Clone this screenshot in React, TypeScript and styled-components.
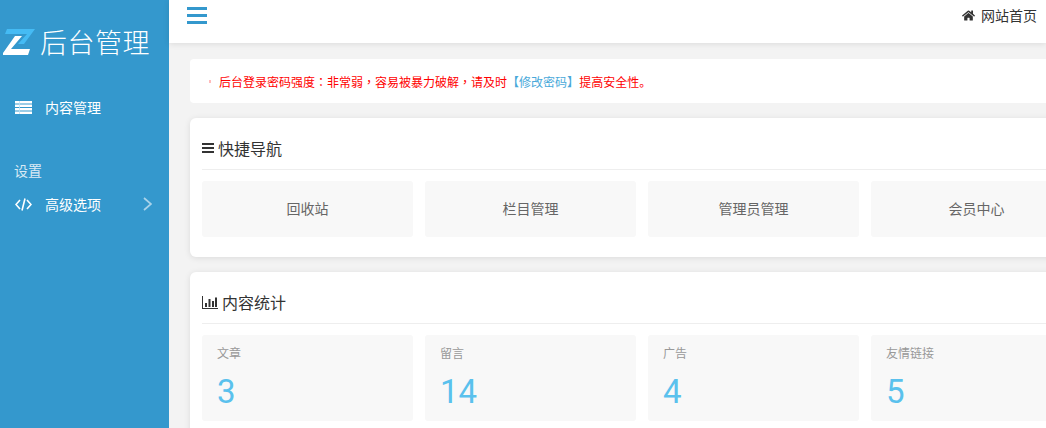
import React from "react";
import styled, { createGlobalStyle } from "styled-components";
import { FaHome } from "react-icons/fa";

const navTiles = ["回收站", "栏目管理", "管理员管理", "会员中心"];
const statTiles = [
  { label: "文章", value: 3 },
  { label: "留言", value: 14 },
  { label: "广告", value: 4 },
  { label: "友情链接", value: 5 },
];

const App = () => {
  return (
    <>
      <GlobalStyle />
      <Page>
        <Sidebar>
          <Logo>
            <svg width="32" height="27" viewBox="0 0 32 27">
              <path d="M4 0H32L21 15H15L24 5H2Z" fill="#45bbf4" />
              <path d="M12 7H19L8 20H27L25 26H0V24Z" fill="#ffffff" />
            </svg>
            <LogoText>后台管理</LogoText>
          </Logo>
          <NavItem>
            <NavIcon>
              <svg width="17" height="13" viewBox="0 0 17 13">
                <path
                  d="M0 0H17V2.500H0ZM0 3.500H17V6H0ZM0 7H17V9.500H0ZM0 10.500H17V13H0Z"
                  fill="#fff"
                />
                <path d="M4 0H4.800V13H4Z" fill="#bfe3f5" />
              </svg>
            </NavIcon>
            内容管理
          </NavItem>
          <NavHeading>设置</NavHeading>
          <NavItem $compact>
            <NavIcon>
              <svg width="17" height="13" viewBox="0 0 17 13" fill="none" stroke="#fff" strokeWidth="1.6">
                <path d="M5 2L1 6.500L5 11M12 2L16 6.500L12 11M10 0.500L7 12.500" />
              </svg>
            </NavIcon>
            高级选项
            <Chevron>
              <svg width="9" height="14" viewBox="0 0 9 14" fill="none" stroke="currentColor" strokeWidth="1.7">
                <path d="M1 1L8 7L1 13" />
              </svg>
            </Chevron>
          </NavItem>
        </Sidebar>
        <Main>
          <TopBar>
            <MenuToggle>
              <svg width="20" height="17" viewBox="0 0 20 17" fill="currentColor">
                <path d="M0 0H20V3H0ZM0 7H20V10H0ZM0 14H20V17H0Z" />
              </svg>
            </MenuToggle>
            <HomeLink>
              <FaHome size={13} />
              网站首页
            </HomeLink>
          </TopBar>
          <Content>
            <Alert>
              <AlertDot />
              后台登录密码强度<Punct>：</Punct>非常弱<Punct>，</Punct>容易被暴力破解<Punct>，</Punct>请及时
              <AlertLink>【修改密码】</AlertLink>
              提高安全性。
            </Alert>
            <Card>
              <CardTitle>
                <svg width="12" height="10" viewBox="0 0 12 10" fill="#333">
                  <path d="M0 0H12V2H0ZM0 4H12V6H0ZM0 8H12V10H0Z" />
                </svg>
                快捷导航
              </CardTitle>
              <TileRow>
                {navTiles.map((name) => (
                  <NavTile key={name}>{name}</NavTile>
                ))}
              </TileRow>
            </Card>
            <Card>
              <CardTitle>
                <svg width="16" height="13" viewBox="0 0 16 13" fill="#333">
                  <path d="M0 0H1V12H16V13H0Z" />
                  <path d="M3 7H5V11H3ZM6.500 3H8.500V11H6.500ZM10 5H12V11H10ZM13 1.500H15V11H13Z" />
                </svg>
                内容统计
              </CardTitle>
              <TileRow>
                {statTiles.map((stat) => (
                  <StatTile key={stat.label}>
                    <StatLabel>{stat.label}</StatLabel>
                    <StatValue>{stat.value}</StatValue>
                  </StatTile>
                ))}
              </TileRow>
            </Card>
          </Content>
        </Main>
      </Page>
    </>
  );
};

export default App;

const GlobalStyle = createGlobalStyle`
  html, body {
    margin: 0;
    padding: 0;
    height: 100%;
    overflow: hidden;
  }
  body {
    font-family: "Noto Sans CJK SC", "Noto Sans", sans-serif;
    color: #333;
  }
`;

const Page = styled.div`
  display: flex;
  width: 1046px;
  height: 428px;
  overflow: hidden;
  background: #f3f3f3;
`;

const Sidebar = styled.aside`
  flex: 0 0 169px;
  background: #3498cd;
  color: #fff;
`;

const Logo = styled.div`
  display: flex;
  align-items: center;
  gap: 5px;
  height: 28px;
  padding: 28px 0 0 3px;
`;

const LogoText = styled.span`
  font-size: 27px;
  font-weight: 300;
  line-height: 28px;
  letter-spacing: 0.5px;
`;

const NavItem = styled.div<{ $compact?: boolean }>`
  display: flex;
  align-items: center;
  height: 20px;
  margin-top: ${({ $compact }) => ($compact ? "14px" : "41px")};
  padding-left: 15px;
  font-size: 14px;
`;

const NavIcon = styled.span`
  display: inline-flex;
  width: 30px;
`;

const NavHeading = styled.div`
  margin-top: 43px;
  padding-left: 14px;
  font-size: 14px;
  line-height: 20px;
  color: #d9eaf5;
`;

const Chevron = styled.span`
  display: inline-flex;
  margin-left: 42px;
  color: #a9d3ea;
`;

const Main = styled.main`
  flex: 1;
  min-width: 0;
`;

const TopBar = styled.header`
  display: flex;
  align-items: flex-start;
  justify-content: space-between;
  height: 43px;
  padding: 0 9px 0 18px;
  background: #fff;
  box-shadow: 0 1px 6px rgba(0, 0, 0, 0.1);
`;

const MenuToggle = styled.span`
  display: inline-flex;
  margin-top: 7px;
  color: #3498cd;
`;

const HomeLink = styled.span`
  display: inline-flex;
  align-items: center;
  gap: 6px;
  margin-top: 5px;
  font-size: 14px;
  line-height: 20px;
`;

const Content = styled.div`
  display: flex;
  flex-direction: column;
  gap: 15px;
  width: 1000px;
  padding: 16px 0 0 21px;
`;

const Alert = styled.div`
  display: flex;
  align-items: center;
  height: 44px;
  padding-left: 19px;
  border-radius: 4px;
  background: #fff;
  font-size: 12px;
  color: #f00;
`;

const AlertDot = styled.i`
  width: 2px;
  height: 3px;
  margin-right: 8px;
  background: #fbb;
`;

const Punct = styled.span`
  font-family: "Noto Sans CJK TC", sans-serif;
`;

const AlertLink = styled.span`
  color: #49a9da;
`;

const Card = styled.section`
  flex: none;
  padding: 12px 12px 20px;
  border-radius: 6px;
  background: #fff;
  box-shadow: 0 1px 6px rgba(0, 0, 0, 0.1);
`;

const CardTitle = styled.h3`
  display: flex;
  align-items: center;
  gap: 4px;
  height: 36px;
  margin: 0 0 11px;
  padding-bottom: 3px;
  border-bottom: 1px solid #eee;
  font-size: 16px;
  font-weight: 400;
  color: #333;
`;

const TileRow = styled.div`
  display: grid;
  grid-template-columns: repeat(4, 211px);
  gap: 12px;
`;

const NavTile = styled.div`
  height: 56px;
  border-radius: 3px;
  background: #f8f8f8;
  font-size: 14px;
  line-height: 54px;
  text-align: center;
  color: #666;
`;

const StatTile = styled.div`
  height: 86px;
  padding-left: 15px;
  border-radius: 3px;
  background: #f8f8f8;
`;

const StatLabel = styled.div`
  padding-top: 9px;
  font-size: 12px;
  line-height: 17px;
  color: #999;
`;

const StatValue = styled.div`
  margin-top: 11px;
  font-family: Roboto, "Noto Sans", sans-serif;
  font-size: 33px;
  font-weight: 400;
  line-height: 40px;
  color: #5ac1ed;
`;
